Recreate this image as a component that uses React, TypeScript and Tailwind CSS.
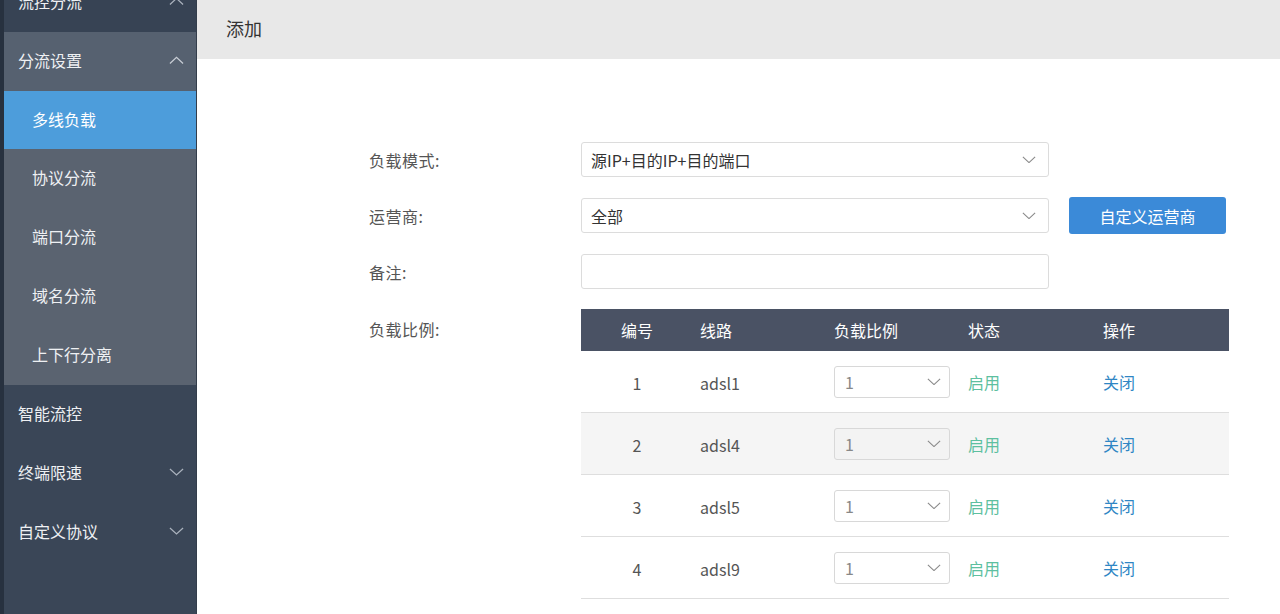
import React from 'react';

const font = { fontFamily: '"Noto Sans CJK SC", "Noto Sans", sans-serif' };

const Chevron: React.FC<{ up?: boolean; className?: string }> = ({ up, className }) => (
  <svg viewBox="0 0 16 9" className={className} fill="none" stroke="currentColor" strokeWidth="1.3">
    {up ? <polyline points="1,8 8,1.5 15,8" /> : <polyline points="1,1 8,7.5 15,1" />}
  </svg>
);

const subItems = ['协议分流', '端口分流', '域名分流', '上下行分离'];

const rows = [
  { id: 1, line: 'adsl1' },
  { id: 2, line: 'adsl4' },
  { id: 3, line: 'adsl5' },
  { id: 4, line: 'adsl9' },
];

const Sidebar: React.FC = () => (
  <div className="flex h-full w-[197px] shrink-0 bg-[#3a4657]">
    <div className="w-[4px] shrink-0 bg-[#27313f]" />
    <div className="flex flex-1 flex-col border-r border-[#333d4b] text-[16px] text-[#eef0f3]">
      {/* partially scrolled out item */}
      <div className="-mt-[27px] flex h-[59px] items-center justify-between bg-[#374354] pb-[3px] pl-[14px] pr-[12px]">
        <span>流控分流</span>
        <Chevron up className="w-[15px] text-[#aab2bd]" />
      </div>
      <div className="flex h-[59px] items-center justify-between bg-[#566170] pb-[3px] pl-[14px] pr-[12px]">
        <span>分流设置</span>
        <Chevron up className="w-[15px] text-[#c9ced6]" />
      </div>
      <div className="flex h-[58px] items-center bg-[#4d9ddb] pb-[3px] pl-[28px] text-white">多线负载</div>
      {subItems.map((s) => (
        <div key={s} className="flex h-[59px] items-center bg-[#5a6370] pb-[3px] pl-[28px]">
          {s}
        </div>
      ))}
      <div className="flex h-[59px] items-center pb-[3px] pl-[14px]">智能流控</div>
      <div className="flex h-[59px] items-center justify-between pb-[3px] pl-[14px] pr-[12px]">
        <span>终端限速</span>
        <Chevron className="w-[15px] text-[#aab2bd]" />
      </div>
      <div className="flex h-[59px] items-center justify-between pb-[3px] pl-[14px] pr-[12px]">
        <span>自定义协议</span>
        <Chevron className="w-[15px] text-[#aab2bd]" />
      </div>
    </div>
  </div>
);

const FormSelect: React.FC<{ value: string }> = ({ value }) => (
  <div className="flex h-[35px] w-[468px] items-center justify-between rounded-[3px] border border-[#dcdcdc] bg-white pl-[9px] pr-[12px] text-[16px] text-[#333]">
    <span>{value}</span>
    <Chevron className="w-[14px] text-[#8a8a8a]" />
  </div>
);

const RatioSelect: React.FC<{ disabled?: boolean }> = ({ disabled }) => (
  <div
    className={`flex h-[32px] w-[116px] items-center justify-between rounded-[3px] border border-[#d8d8d8] pl-[10px] pr-[8px] text-[16px] text-[#888] ${
      disabled ? 'bg-[#f3f3f3]' : 'bg-white'
    }`}
  >
    <span>1</span>
    <Chevron className="w-[14px] text-[#8a8a8a]" />
  </div>
);

export default function App() {
  return (
    <div className="flex h-[614px] w-[1280px] overflow-hidden bg-white" style={font}>
      <Sidebar />
      <div className="flex flex-1 flex-col">
        <div className="flex h-[59px] shrink-0 items-center bg-[#e8e8e8] pb-[2px] pl-[29px] text-[18px] text-[#333]">
          添加
        </div>
        <div className="flex flex-col pl-[172px] pt-[83px]">
          {/* 负载模式 */}
          <div className="flex items-center">
            <div className="w-[212px] text-[16px] tracking-[0.5px] text-[#555]">负载模式:</div>
            <FormSelect value="源IP+目的IP+目的端口" />
          </div>
          {/* 运营商 */}
          <div className="mt-[20px] flex items-center">
            <div className="w-[212px] text-[16px] tracking-[0.5px] text-[#555]">运营商:</div>
            <FormSelect value="全部" />
            <button className="ml-[20px] h-[37px] w-[157px] rounded-[3px] bg-[#3b8ad8] text-[16px] text-white">
              自定义运营商
            </button>
          </div>
          {/* 备注 */}
          <div className="mt-[20px] flex items-center">
            <div className="w-[212px] text-[16px] tracking-[0.5px] text-[#555]">备注:</div>
            <div className="h-[35px] w-[468px] rounded-[3px] border border-[#dcdcdc] bg-white" />
          </div>
          {/* 负载比例 */}
          <div className="mt-[20px] flex items-start">
            <div className="w-[212px] pt-[8px] text-[16px] tracking-[0.5px] text-[#555]">负载比例:</div>
            <div className="w-[648px] text-[16px]">
              <div className="flex h-[42px] items-center bg-[#4a5264] text-white">
                <div className="w-[112px] text-center">编号</div>
                <div className="w-[134px] pl-[7px]">线路</div>
                <div className="w-[134px] pl-[7px]">负载比例</div>
                <div className="w-[135px] pl-[7px]">状态</div>
                <div className="flex-1 pl-[7px]">操作</div>
              </div>
              {rows.map((r, i) => (
                <div
                  key={r.id}
                  className={`flex h-[62px] items-center border-b border-[#dedede] ${
                    i === 1 ? 'bg-[#f5f5f5]' : 'bg-white'
                  }`}
                >
                  <div className="w-[112px] pt-[2px] text-center text-[#555]">{r.id}</div>
                  <div className="w-[134px] pl-[7px] pt-[2px] text-[#555]">{r.line}</div>
                  <div className="w-[134px] pl-[7px]">
                    <RatioSelect disabled={i === 1} />
                  </div>
                  <div className="w-[135px] pl-[7px] text-[#5dc0a0]">启用</div>
                  <div className="flex-1 pl-[7px] text-[#2f86c4]">关闭</div>
                </div>
              ))}
            </div>
          </div>
        </div>
      </div>
    </div>
  );
}
